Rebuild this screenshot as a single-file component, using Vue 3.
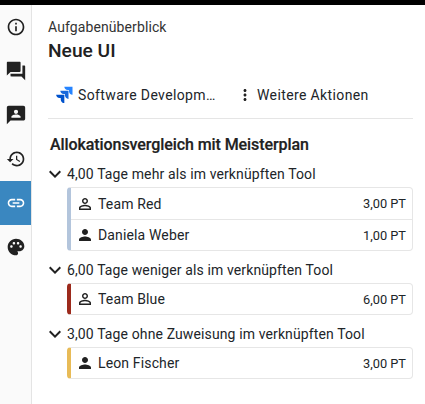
<script setup>
const personFilled = 'M12 12c2.21 0 4-1.79 4-4s-1.79-4-4-4-4 1.79-4 4 1.79 4 4 4zm0 2c-2.67 0-8 1.34-8 4v2h16v-2c0-2.66-5.33-4-8-4z'
const personOutline = 'M12 5.9c1.16 0 2.1.94 2.1 2.1s-.94 2.1-2.1 2.1S9.9 9.16 9.9 8s.94-2.1 2.1-2.1m0 9c2.97 0 6.1 1.46 6.1 2.1v1.1H5.9V17c0-.64 3.13-2.1 6.1-2.1M12 4C9.79 4 8 5.79 8 8s1.79 4 4 4 4-1.79 4-4-1.79-4-4-4zm0 9c-2.67 0-8 1.34-8 4v3h16v-3c0-2.66-5.33-4-8-4z'

const navItems = [
  { d: 'M11 7h2v2h-2zm0 4h2v6h-2zm1-9C6.48 2 2 6.48 2 12s4.48 10 10 10 10-4.48 10-10S17.52 2 12 2zm0 18c-4.41 0-8-3.59-8-8s3.59-8 8-8 8 3.59 8 8-3.59 8-8 8z' },
  { d: 'M21 6h-2v9H6v2c0 .55.45 1 1 1h11l4 4V7c0-.55-.45-1-1-1zm-4 6V3c0-.55-.45-1-1-1H3c-.55 0-1 .45-1 1v14l4-4h10c.55 0 1-.45 1-1z', large: true },
  { d: 'M20 2H4c-1.1 0-2 .9-2 2v18l4-4h14c1.1 0 2-.9 2-2V4c0-1.1-.9-2-2-2zm-8 4.2a2.3 2.3 0 1 1 0 4.6 2.3 2.3 0 0 1 0-4.6zM17 15H7v-1c0-1.7 3.3-2.5 5-2.5s5 .8 5 2.5v1z', large: true },
  { d: 'M13 3c-4.97 0-9 4.03-9 9H1l3.89 3.89.07.14L9 12H6c0-3.87 3.13-7 7-7s7 3.13 7 7-3.13 7-7 7c-1.93 0-3.68-.79-4.94-2.06l-1.42 1.42C8.27 19.99 10.51 21 13 21c4.97 0 9-4.03 9-9s-4.03-9-9-9zm-1 5v5l4.28 2.54.72-1.21-3.5-2.08V8H12z' },
  { d: 'M3.9 12c0-1.71 1.39-3.1 3.1-3.1h4V7H7c-2.76 0-5 2.24-5 5s2.24 5 5 5h4v-1.9H7c-1.71 0-3.1-1.39-3.1-3.1zM8 13h8v-2H8v2zm9-6h-4v1.9h4c1.71 0 3.1 1.39 3.1 3.1s-1.39 3.1-3.1 3.1h-4V17h4c2.76 0 5-2.24 5-5s-2.24-5-5-5z', active: true },
  { d: 'M12 2C6.49 2 2 6.49 2 12s4.49 10 10 10c1.38 0 2.5-1.12 2.5-2.5 0-.61-.23-1.2-.64-1.67-.08-.1-.13-.21-.13-.33 0-.28.22-.5.5-.5H16c3.31 0 6-2.69 6-6 0-4.96-4.49-9-10-9zm5.5 11c-.83 0-1.5-.67-1.5-1.5s.67-1.5 1.5-1.5 1.5.67 1.5 1.5-.67 1.5-1.5 1.5zm-3-4c-.83 0-1.5-.67-1.5-1.5S13.67 6 14.5 6s1.5.67 1.5 1.5S15.33 9 14.5 9zM5 11.5c0-.83.67-1.5 1.5-1.5s1.5.67 1.5 1.5S7.33 13 6.5 13 5 12.33 5 11.5zm6-4c0 .83-.67 1.5-1.5 1.5S8 8.33 8 7.5 8.67 6 9.5 6s1.5.67 1.5 1.5z' }
]

const groups = [
  { label: '4,00 Tage mehr als im verknüpften Tool', color: '#b3c5dc', rows: [
    { name: 'Team Red', value: '3,00 PT', icon: personOutline },
    { name: 'Daniela Weber', value: '1,00 PT', icon: personFilled }
  ] },
  { label: '6,00 Tage weniger als im verknüpften Tool', color: '#9c2a1c', rows: [
    { name: 'Team Blue', value: '6,00 PT', icon: personOutline }
  ] },
  { label: '3,00 Tage ohne Zuweisung im verknüpften Tool', color: '#e8bb57', rows: [
    { name: 'Leon Fischer', value: '3,00 PT', icon: personFilled }
  ] }
]
</script>

<template>
  <div class="page">
    <div class="topbar"></div>
    <div class="body">
      <nav class="sidebar">
        <div v-for="(item, i) in navItems" :key="i" class="nav-item" :class="{ active: item.active, large: item.large }">
          <svg class="nav-icon" viewBox="0 0 24 24"><path :d="item.d" /></svg>
        </div>
      </nav>
      <main class="content">
        <div class="eyebrow">Aufgabenüberblick</div>
        <h1 class="title">Neue UI</h1>
        <div class="actions">
          <div class="action first">
            <svg class="jira" viewBox="0 0 24 24">
              <path fill="#2684ff" d="M12.4 2h9.8v9.8c-2.4 0-4.3-2-4.3-4.3V5.9h-1.5c-2.2 0-4-1.7-4-3.9z" />
              <path fill="#1868db" d="M7.6 6.9h9.8v9.8c-2.4 0-4.3-2-4.3-4.3v-1.6h-1.5c-2.2 0-4-1.7-4-3.9z" />
              <path fill="#0052cc" d="M2.6 11.8h9.8v9.9c-2.4 0-4.3-2-4.3-4.4v-1.6H6.6c-2.2 0-4-1.7-4-3.9z" />
            </svg>
            <span>Software Developm…</span>
          </div>
          <div class="action second">
            <svg class="more" viewBox="0 0 24 24"><path d="M12 8c1.1 0 2-.9 2-2s-.9-2-2-2-2 .9-2 2 .9 2 2 2zm0 2c-1.1 0-2 .9-2 2s.9 2 2 2 2-.9 2-2-.9-2-2-2zm0 6c-1.1 0-2 .9-2 2s.9 2 2 2 2-.9 2-2-.9-2-2-2z" /></svg>
            <span>Weitere Aktionen</span>
          </div>
        </div>
        <div class="divider"></div>
        <h2 class="section">Allokationsvergleich mit Meisterplan</h2>
        <section v-for="g in groups" :key="g.label" class="group">
          <div class="group-head">
            <svg class="chevron" viewBox="0 0 24 24"><path d="M16.59 8.59L12 13.17 7.41 8.59 6 10l6 6 6-6z" /></svg>
            <span>{{ g.label }}</span>
          </div>
          <div class="card" :style="{ borderLeftColor: g.color }">
            <div v-for="r in g.rows" :key="r.name" class="row">
              <svg class="person" viewBox="0 0 24 24"><path :d="r.icon" /></svg>
              <span class="name">{{ r.name }}</span>
              <span class="value">{{ r.value }}</span>
            </div>
          </div>
        </section>
      </main>
    </div>
  </div>
</template>

<style>
html, body { margin: 0; background: #fff; }
</style>

<style scoped>
.page {
  width: 425px;
  height: 404px;
  overflow: hidden;
  display: flex;
  flex-direction: column;
  font-family: Roboto, "Liberation Sans", sans-serif;
  font-size: 14px;
  color: #212529;
  background: #fff;
}
.topbar { height: 5px; background: #000; flex: none; }
.body { flex: 1; display: flex; min-height: 0; }
.sidebar {
  width: 31px;
  flex: none;
  background: #fafafa;
  border-right: 1px solid #e4e4e4;
  display: flex;
  flex-direction: column;
}
.nav-item {
  height: 44px;
  display: flex;
  align-items: center;
  justify-content: center;
}
.nav-icon { width: 20px; height: 20px; fill: #212121; }
.nav-item.large .nav-icon { width: 22px; height: 22px; }
.nav-item.active { background: #3a87c0; }
.nav-item.active .nav-icon { fill: #fff; }
.content { flex: 1; padding: 0 12px 0 16px; min-width: 0; }
.eyebrow { margin-top: 13px; line-height: 18px; font-size: 14px; letter-spacing: 0.1px; color: #333; }
.title { margin: 3px 0 0; font-size: 19.2px; font-weight: 500; line-height: 24px; color: #212121; }
.actions { display: flex; align-items: center; height: 24px; margin-top: 20px; }
.action { display: flex; align-items: center; font-size: 14px; letter-spacing: 0.38px; color: #212529; }
.first { margin-left: 7px; width: 181px; }
.jira { width: 20px; height: 20px; flex: none; margin-left: -1px; margin-right: 4px; }
.more { width: 18px; height: 18px; flex: none; margin-right: 3px; fill: #212121; }
.divider { height: 1px; background: #e5e5e5; margin-top: 11px; }
.section { margin: 16px 0 0 2px; font-size: 16px; font-weight: 500; line-height: 20px; letter-spacing: -0.08px; color: #212121; -webkit-text-stroke: 0.2px #212121; }
.group { margin-top: 10px; }
.group-head { display: flex; align-items: center; height: 18px; font-size: 14px; letter-spacing: 0.12px; color: #212529; }
.chevron { width: 24px; height: 24px; flex: none; margin: 0 -3px 0 -5px; fill: #212121; }
.group-head span { margin-left: 3px; }
.card {
  margin: 4px 0 0 19px;
  border: 1px solid #e6e6e6;
  border-left: 4px solid;
  border-radius: 4px;
  background: #fff;
}
.row {
  display: flex;
  align-items: center;
  height: 30px;
  padding: 0 6px 0 5px;
}
.row:not(:last-child) { height: 31px; }
.row + .row { border-top: 1px solid #e6e6e6; }
.person { width: 18px; height: 18px; flex: none; fill: #212121; margin-right: 4px; }
.name { flex: 1; font-size: 14px; letter-spacing: 0.14px; }
.value { font-size: 12.8px; color: #212529; }
</style>
